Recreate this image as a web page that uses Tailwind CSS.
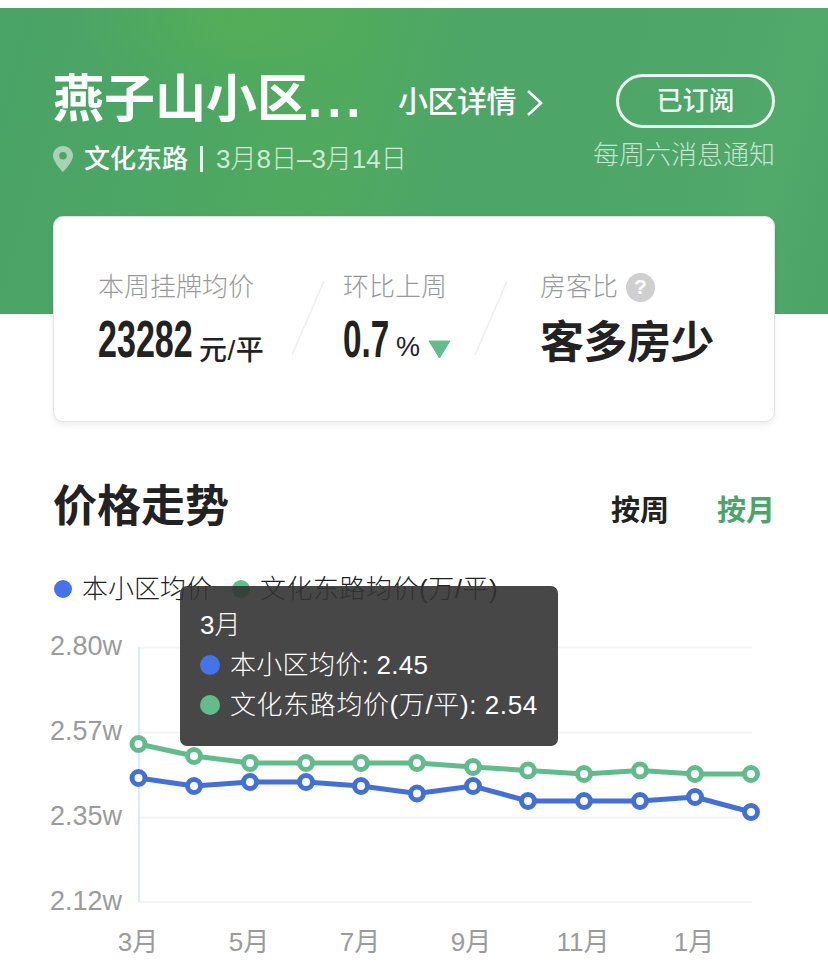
<!DOCTYPE html>
<html lang="zh"><head><meta charset="utf-8">
<script src="https://cdn.jsdelivr.net/npm/@tailwindcss/browser@4"></script>
</head>
<body class="bg-white">
<div class="w-[828px] h-[980px] overflow-hidden bg-white pt-2 font-['Liberation_Sans','Noto_Sans_CJK_SC',sans-serif] text-[#222]">
  <header class="h-[306px] px-[53px] pt-[61px] text-white bg-[radial-gradient(ellipse_160px_90px_at_240px_10px,#54ae57_0%,transparent_100%),linear-gradient(105deg,#4aa367_0%,#4ca664_22%,#50aa5e_40%,#4da568_55%,#4ea769_80%,#51aa6a_90%,#4ba366_100%)]">
    <div class="flex items-start justify-between">
      <div>
        <div class="flex items-center h-[62px]">
          <h1 class="text-[51px] leading-[62px] font-semibold w-[345px] whitespace-nowrap">燕子山小区<span class="tracking-[5px] font-bold">...</span></h1>
          <span class="text-[30px] font-medium leading-[62px] tracking-[-0.5px] mt-[3px]">小区详情</span>
          <svg class="ml-[10px] mt-[5px]" width="18" height="28" viewBox="0 0 18 28" fill="none" stroke="#fff" stroke-width="2.6"><path d="M2 2l13 12L2 26"/></svg>
        </div>
        <div class="flex items-center h-[40px] mt-[8px]">
          <svg width="20" height="26" viewBox="0 0 20 26"><path fill="#a6d3b3" fill-rule="evenodd" d="M10 0C4.500 0 0 4.300 0 9.700 0 16 10 26 10 26s10-10 10-16.300C20 4.300 15.500 0 10 0zm0 13.500a3.800 3.800 0 1 1 0-7.600 3.800 3.800 0 0 1 0 7.600z"/></svg>
          <span class="ml-[11px] text-[26px] font-medium">文化东路</span>
          <span class="ml-[12px] w-[3px] h-[26px] bg-white/90"></span>
          <span class="ml-[13px] text-[26px] font-light text-white/75 whitespace-nowrap">3月8日–3月14日</span>
        </div>
      </div>
      <div class="flex flex-col items-end mt-[5px]">
        <button class="w-[159px] h-[54px] rounded-full border-[3px] border-white/90 text-[26px] font-medium text-white/95">已订阅</button>
        <span class="mt-[9px] text-[26px] font-light text-white/70 leading-[36px] whitespace-nowrap">每周六消息通知</span>
      </div>
    </div>
  </header>

  <section class="relative mx-[53px] -mt-[98px] h-[206px] rounded-[10px] bg-white border border-[#e3e3e3] shadow-[0_3px_6px_rgba(0,0,0,0.07)] pl-[44px] pt-[52px] flex">
    <div class="w-[190px]">
      <div class="text-[26px] font-light text-[#999] leading-[36px] whitespace-nowrap">本周挂牌均价</div>
      <div class="flex items-end mt-[9px] h-[50px]">
        <span class="w-[101px] inline-block origin-left scale-x-[0.655] text-[52px] leading-[50px] font-bold text-[#222]">23282</span>
        <span class="text-[28px] font-medium leading-[36px] tracking-[0.5px] whitespace-nowrap -mb-[5px]">元/平</span>
      </div>
    </div>
    <svg class="mt-[11px] ml-[3px]" width="34" height="76" viewBox="0 0 34 76"><path d="M33 1L1 75" stroke="#eeeeee" stroke-width="1.500"/></svg>
    <div class="w-[165px] ml-[18px]">
      <div class="text-[26px] font-light text-[#999] leading-[36px]">环比上周</div>
      <div class="flex items-end mt-[9px] h-[50px]">
        <span class="w-[49px] inline-block origin-left scale-x-[0.64] text-[52px] leading-[50px] font-bold">0.7</span>
        <span class="text-[27px] leading-[34px] ml-[4px]">%</span>
        <svg class="ml-[8px] mb-[5px]" width="23" height="19" viewBox="0 0 23 19"><path d="M1 1h21L11.500 18z" fill="#62bd8b" stroke="#62bd8b" stroke-linejoin="round"/></svg>
      </div>
    </div>
    <svg class="mt-[11px] -ml-[34px]" width="34" height="76" viewBox="0 0 34 76"><path d="M33 1L1 75" stroke="#eeeeee" stroke-width="1.500"/></svg>
    <div class="ml-[32px]">
      <div class="flex items-center h-[36px]">
        <span class="text-[26px] font-light text-[#999]">房客比</span>
        <span class="ml-[8px] w-[29px] h-[29px] rounded-full bg-[#cfcfcf] text-white text-[21px] font-bold flex items-center justify-center">?</span>
      </div>
      <div class="mt-[10px] text-[44px] leading-[56px] font-bold whitespace-nowrap tracking-[-0.5px]">客多房少</div>
    </div>
  </section>

  <div class="mx-[53px] mt-[53px] h-[64px] flex items-center justify-between">
    <h2 class="text-[44px] font-bold leading-[64px]">价格走势</h2>
    <div class="flex gap-[48px] text-[29px] font-bold mt-[9px]">
      <span>按周</span><span class="text-[#4aa56a]">按月</span>
    </div>
  </div>

  <div class="relative mt-[32px] h-[400px]">
    <div class="flex items-center pl-[54px] h-[36px] text-[26px] font-light whitespace-nowrap text-[#222]">
      <span class="w-[18px] h-[18px] rounded-full bg-[#4474e8]"></span>
      <span class="ml-[10px]">本小区均价</span>
      <span class="ml-[20px] w-[18px] h-[18px] rounded-full bg-[#62bd8b]"></span>
      <span class="ml-[10px] tracking-[0.5px]">文化东路均价(万/平)</span>
    </div>
    <svg class="absolute left-0 top-[0px]" width="828" height="400" viewBox="0 571 828 400" font-family="Liberation Sans, Noto Sans CJK SC, sans-serif" font-size="26" fill="#9b9b9b">
      <g stroke="#f5f5f5" stroke-width="2">
        <path d="M138 647.500H752M138 732.500H752M138 817.500H752M138 902H752"/>
      </g>
      <path d="M139 647V902" stroke="#cfe3f5" stroke-width="1.500"/>
      <g text-anchor="end" font-size="27">
        <text x="122" y="655">2.80w</text>
        <text x="122" y="740">2.57w</text>
        <text x="122" y="825">2.35w</text>
        <text x="122" y="910">2.12w</text>
      </g>
      <g text-anchor="middle">
        <text x="138" y="951">3月</text>
        <text x="249" y="951">5月</text>
        <text x="360" y="951">7月</text>
        <text x="471" y="951">9月</text>
        <text x="583" y="951">11月</text>
        <text x="694" y="951">1月</text>
      </g>
      <g fill="#fff" stroke="#62bb8c" stroke-width="5">
        <polyline fill="none" points="138.500,744 194,756 250,763 306,763 361,763 417,763 473,767 528,770.500 584,774 640,770.500 695,774 751,774"/>
        <circle cx="138.500" cy="744" r="6.500"/><circle cx="194" cy="756" r="6.500"/><circle cx="250" cy="763" r="6.500"/><circle cx="306" cy="763" r="6.500"/><circle cx="361" cy="763" r="6.500"/><circle cx="417" cy="763" r="6.500"/><circle cx="473" cy="767" r="6.500"/><circle cx="528" cy="770.500" r="6.500"/><circle cx="584" cy="774" r="6.500"/><circle cx="640" cy="770.500" r="6.500"/><circle cx="695" cy="774" r="6.500"/><circle cx="751" cy="774" r="6.500"/>
      </g>
      <g fill="#fff" stroke="#4470d6" stroke-width="5">
        <polyline fill="none" points="138.500,778 194,786 250,782 306,782 361,786 417,793.500 473,786 528,801 584,801 640,801 695,797 751,812"/>
        <circle cx="138.500" cy="778" r="6.500"/><circle cx="194" cy="786" r="6.500"/><circle cx="250" cy="782" r="6.500"/><circle cx="306" cy="782" r="6.500"/><circle cx="361" cy="786" r="6.500"/><circle cx="417" cy="793.500" r="6.500"/><circle cx="473" cy="786" r="6.500"/><circle cx="528" cy="801" r="6.500"/><circle cx="584" cy="801" r="6.500"/><circle cx="640" cy="801" r="6.500"/><circle cx="695" cy="797" r="6.500"/><circle cx="751" cy="812" r="6.500"/>
      </g>
    </svg>
    <div class="absolute left-[180px] top-[15px] w-[378px] h-[160px] rounded-[7px] bg-[#333]/90 px-[20px] pt-[19px] text-[26px] leading-[40px] font-light text-white whitespace-nowrap">
      <div>3月</div>
      <div class="flex items-center tracking-[0.3px]"><span class="w-[20px] h-[20px] rounded-full bg-[#4474e8] mr-[10px]"></span>本小区均价: 2.45</div>
      <div class="flex items-center tracking-[0.6px]"><span class="w-[20px] h-[20px] rounded-full bg-[#62bd8b] mr-[10px]"></span>文化东路均价(万/平): 2.54</div>
    </div>
  </div>
</div>
</body></html>
